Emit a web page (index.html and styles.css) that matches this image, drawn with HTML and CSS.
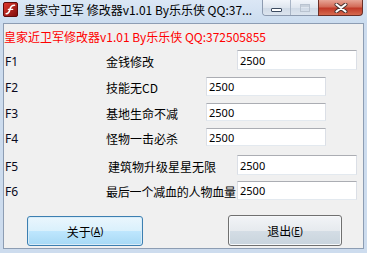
FILE: index.html
```html
<!DOCTYPE html>
<html>
<head>
<meta charset="utf-8">
<link rel="stylesheet" href="styles.css">
</head>
<body>
<div class="window">
  <div class="titlebar">
    <svg class="appicon" width="15" height="15" viewBox="0 0 15 15">
      <defs>
        <linearGradient id="ig" x1="0" y1="0" x2="1" y2="1">
          <stop offset="0" stop-color="#e23b30"/>
          <stop offset="1" stop-color="#7e0c0c"/>
        </linearGradient>
      </defs>
      <rect x="0.5" y="0.5" width="14" height="14" rx="1.5" fill="url(#ig)" stroke="#5e0a0a" stroke-width="1"/>
      <path d="M11.5 3.2 C8.5 3.0 7.6 4.8 7.0 7.2 C6.4 9.6 5.6 11.6 3.2 11.8" fill="none" stroke="#fff" stroke-width="1.6" stroke-linecap="round"/>
      <path d="M5.4 7.4 H9.6" fill="none" stroke="#fff" stroke-width="1.4" stroke-linecap="round"/>
    </svg>
    <span class="title">皇家守卫军 修改器v1.01 By乐乐侠 QQ:37...</span>
    <div class="caps">
      <div class="capgroup">
        <div class="cap cap-min"><span class="min-ico"></span></div>
        <div class="cap cap-max"><span class="max-ico"></span></div>
      </div>
      <div class="cap cap-close">
        <svg width="16" height="10" viewBox="0 0 16 10">
          <path d="M3.5 1.5 L12.5 8.5 M12.5 1.5 L3.5 8.5" stroke="#47302c" stroke-width="4" stroke-linecap="round"/>
          <path d="M3.5 1.5 L12.5 8.5 M12.5 1.5 L3.5 8.5" stroke="#ffffff" stroke-width="2.2" stroke-linecap="round"/>
        </svg>
      </div>
    </div>
  </div>
  <div class="client">
    <div class="banner">皇家近卫军修改器v1.01 By乐乐侠 QQ:372505855</div>
    <div class="rows">
      <div class="row row1">
        <span class="key">F1</span>
        <span class="label lw-130">金钱修改</span>
        <div class="edit">2500</div>
      </div>
      <div class="row row2">
        <span class="key">F2</span>
        <span class="label lw-100">技能无CD</span>
        <div class="edit">2500</div>
      </div>
      <div class="row row3">
        <span class="key">F3</span>
        <span class="label lw-100">基地生命不减</span>
        <div class="edit">2500</div>
      </div>
      <div class="row row4">
        <span class="key">F4</span>
        <span class="label lw-100">怪物一击必杀</span>
        <div class="edit">2500</div>
      </div>
      <div class="row row5">
        <span class="key">F5</span>
        <span class="label lw-128 shift">建筑物升级星星无限</span>
        <div class="edit">2500</div>
      </div>
      <div class="row row6">
        <span class="key">F6</span>
        <span class="label lw-130 tight">最后一个减血的人物血量</span>
        <div class="edit">2500</div>
      </div>
    </div>
    <div class="buttons">
      <div class="btn btn-default">关于<span class="acc">(<u>A</u>)</span></div>
      <div class="btn btn-normal">退出<span class="acc">(<u>E</u>)</span></div>
    </div>
  </div>
</div>
</body>
</html>
```

FILE: styles.css
```css
html, body {
  margin: 0;
  padding: 0;
}
body {
  width: 367px;
  height: 253px;
  overflow: hidden;
  font-family: "Noto Sans CJK SC", sans-serif;
}
.window {
  width: 367px;
  height: 253px;
  box-sizing: border-box;
  background: #cddcee;
  display: flex;
  flex-direction: column;
}
.titlebar {
  height: 23px;
  display: flex;
  align-items: flex-start;
  background: linear-gradient(#dbe7f5, #cbdcef);
  position: relative;
}
.appicon {
  margin: 2px 0 0 3px;
  flex: none;
}
.title {
  margin: 2px 0 0 6px;
  font-family: "Noto Sans CJK SC", sans-serif;
  font-size: 12px;
  line-height: 16px;
  color: #000;
  white-space: nowrap;
}
.caps {
  position: absolute;
  top: 0;
  left: 262px;
  display: flex;
}
.capgroup {
  display: flex;
  height: 15px;
  border: 1px solid #8d9bb0;
  border-top: none;
  border-right: none;
  border-bottom-left-radius: 4px;
  overflow: hidden;
}
.cap {
  height: 15px;
  display: flex;
  align-items: center;
  justify-content: center;
}
.cap-min {
  width: 27px;
  background: linear-gradient(#f2f5fa, #dfe6ef 50%, #cfd9e6 51%, #dce4ee);
  border-right: 1px solid #a9b5c6;
}
.cap-max {
  width: 27px;
  background: linear-gradient(#f2f5fa, #dfe6ef 50%, #cfd9e6 51%, #dce4ee);
}
.min-ico {
  width: 9px;
  height: 2px;
  margin-top: 4px;
  background: #fff;
  border: 1px solid #3d4c61;
  border-radius: 1px;
}
.max-ico {
  width: 8px;
  height: 6px;
  border: 1px solid #b9c3d0;
  box-shadow: inset 0 2px 0 #c8d1dc;
}
.cap-close {
  width: 45px;
  height: 16px;
  border: 1px solid #6b2f27;
  border-top: none;
  border-bottom-right-radius: 4px;
  box-sizing: border-box;
  background: linear-gradient(#e7a596, #d36b58 45%, #c13a28 55%, #d66a4f);
}
.client {
  flex: 1;
  margin: 0 3px 4px 3px;
  border: 1px solid #8d9db3;
  background: #f0f0f0;
  display: flex;
  flex-direction: column;
}
.banner {
  margin: 5px 0 0 0;
  padding-left: 0;
  font-size: 12px;
  line-height: 16px;
  color: #ff0000;
  white-space: nowrap;
}
.rows {
  display: flex;
  flex-direction: column;
}
.row {
  display: flex;
  align-items: center;
  white-space: nowrap;
}
.row1 { margin-top: 5px; height: 20px; }
.row2 { margin-top: 7px; height: 19px; }
.row3 { margin-top: 7px; height: 18px; }
.row4 { margin-top: 7px; height: 18px; }
.row5 { margin-top: 9px; height: 20px; }
.row6 { margin-top: 6px; height: 19px; }
.key {
  width: 101px;
  padding-left: 1px;
  flex: none;
  font-family: "Noto Sans", sans-serif;
  font-size: 12px;
  color: #0a0a20;
  position: relative;
  top: 1px;
}
.label {
  flex: none;
  font-size: 12px;
  color: #000;
  position: relative;
  top: 1px;
}
.shift { padding-left: 2px; }
.tight { letter-spacing: -0.2px; }
.lw-130 { width: 131px; }
.lw-128 { width: 129px; }
.lw-100 { width: 100px; }
.edit {
  flex: none;
  width: 120px;
  height: 100%;
  box-sizing: border-box;
  background: #fff;
  border: 1px solid #dbdfe6;
  border-top-color: #abadb3;
  border-bottom-color: #e3e9ef;
  padding-left: 2px;
  font-family: "Noto Sans", sans-serif;
  font-size: 11px;
  display: flex;
  align-items: center;
  color: #000;
}
.buttons {
  display: flex;
  align-items: flex-start;
  margin-top: 15px;
}
.btn {
  box-sizing: border-box;
  display: flex;
  align-items: center;
  justify-content: center;
  border-radius: 3px;
  font-size: 12px;
  color: #000;
}
.acc {
  font-family: "Noto Sans", sans-serif;
  font-size: 10px;
}
.btn-default {
  margin: 1px 0 0 23px;
  width: 116px;
  height: 30px;
  border: 1px solid #3c7fb1;
  background: linear-gradient(#eaf6fd, #d9f0fc 50%, #bee6fd 51%, #a7d9f5);
  box-shadow: inset 0 0 0 1px #d8ecf8;
}
.btn-normal {
  margin-left: 85px;
  width: 114px;
  height: 31px;
  border: 1px solid #707070;
  background: linear-gradient(#f2f4f7, #e6eaee 50%, #d4dde5 51%, #c9d4dd);
  box-shadow: inset 0 0 0 1px #f6f8fa;
}
```
